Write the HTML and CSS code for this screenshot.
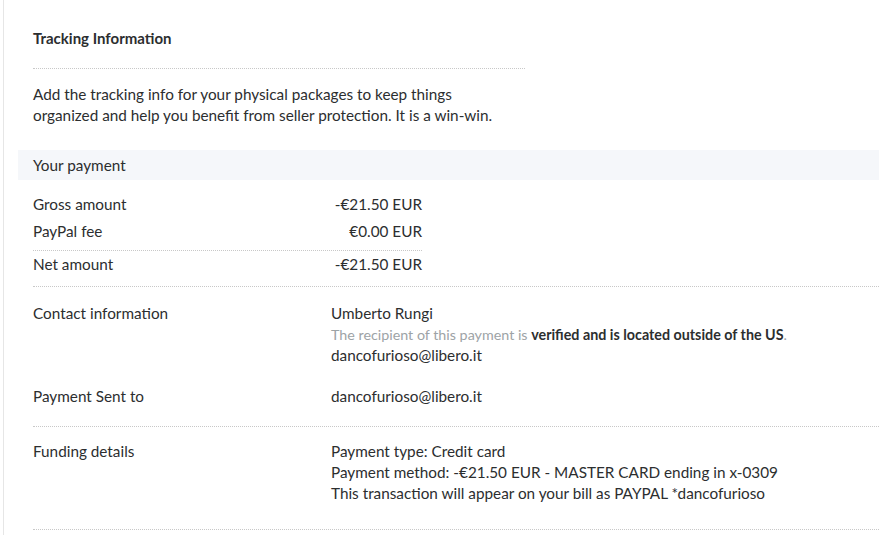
FILE: index.html
```html
<!DOCTYPE html>
<html>
<head>
<meta charset="utf-8">
<link rel="stylesheet" href="styles.css">
</head>
<body>
<div class="card">
  <section class="tracking">
    <h2 class="heading">Tracking Information</h2>
    <div class="rule-short"></div>
    <p class="desc">Add the tracking info for your physical packages to keep things<br>organized and help you benefit from seller protection. It is a win-win.</p>
  </section>

  <div class="band">Your payment</div>

  <section class="amounts">
    <div class="amt-row"><span>Gross amount</span><span>-€21.50 EUR</span></div>
    <div class="amt-row fee"><span>PayPal fee</span><span>€0.00 EUR</span></div>
    <div class="net-wrap">
      <div class="amt-row"><span>Net amount</span><span>-€21.50 EUR</span></div>
    </div>
  </section>

  <section class="kv-block contact">
    <div class="kv">
      <div class="key">Contact information</div>
      <div class="val">
        <div>Umberto Rungi</div>
        <div class="note">The recipient of this payment is <b>verified and is located outside of the US</b>.</div>
        <div>dancofurioso@libero.it</div>
      </div>
    </div>
    <div class="kv">
      <div class="key">Payment Sent to</div>
      <div class="val"><div>dancofurioso@libero.it</div></div>
    </div>
  </section>

  <section class="kv-block funding">
    <div class="kv">
      <div class="key">Funding details</div>
      <div class="val">
        <div>Payment type: Credit card</div>
        <div>Payment method: -€21.50 EUR - MASTER CARD ending in x-0309</div>
        <div>This transaction will appear on your bill as PAYPAL *dancofurioso</div>
      </div>
    </div>
  </section>
</div>
</body>
</html>
```

FILE: styles.css
```css
html, body {
  margin: 0;
  padding: 0;
  background: #ffffff;
}
body {
  font-family: "Lato", "Open Sans", sans-serif;
  font-size: 15.3px;
  color: #2c2e2f;
}
.card {
  margin-left: 3px;
  border-left: 1px solid #e6e6e6;
  padding-left: 14px;
  min-height: 535px;
  box-sizing: border-box;
}
.tracking {
  padding: 27px 0 0 15px;
}
.heading {
  margin: 0;
  font-size: 15px;
  font-weight: 700;
  line-height: 22px;
}
.rule-short {
  width: 492px;
  border-top: 1px dotted #c8c8c8;
  margin-top: 19px;
}
.desc {
  margin: 15px 0 0;
  line-height: 21px;
}
.band {
  margin-top: 24px;
  background: #f5f7fa;
  height: 30px;
  line-height: 30px;
  padding-left: 15px;
}
.amounts {
  padding: 11px 0 0 15px;
}
.amt-row {
  display: flex;
  justify-content: space-between;
  width: 389px;
  line-height: 27px;
}
.amt-row.fee {
  padding-bottom: 5px;
  border-bottom: 1px dotted #c8c8c8;
}
.net-wrap {
  padding-bottom: 8px;
  border-bottom: 1px dotted #c8c8c8;
}
.kv-block {
  margin-left: 15px;
  border-bottom: 1px dotted #c8c8c8;
  display: flex;
  flex-direction: column;
  gap: 20px;
}
.contact {
  padding: 16px 0 19px;
}
.funding {
  padding: 14px 0 25px;
}
.kv {
  display: grid;
  grid-template-columns: 298px 1fr;
  line-height: 21px;
}
.note {
  font-size: 14.3px;
  color: #9da3a6;
}
.note b {
  color: #2c2e2f;
  font-weight: 700;
}
```
